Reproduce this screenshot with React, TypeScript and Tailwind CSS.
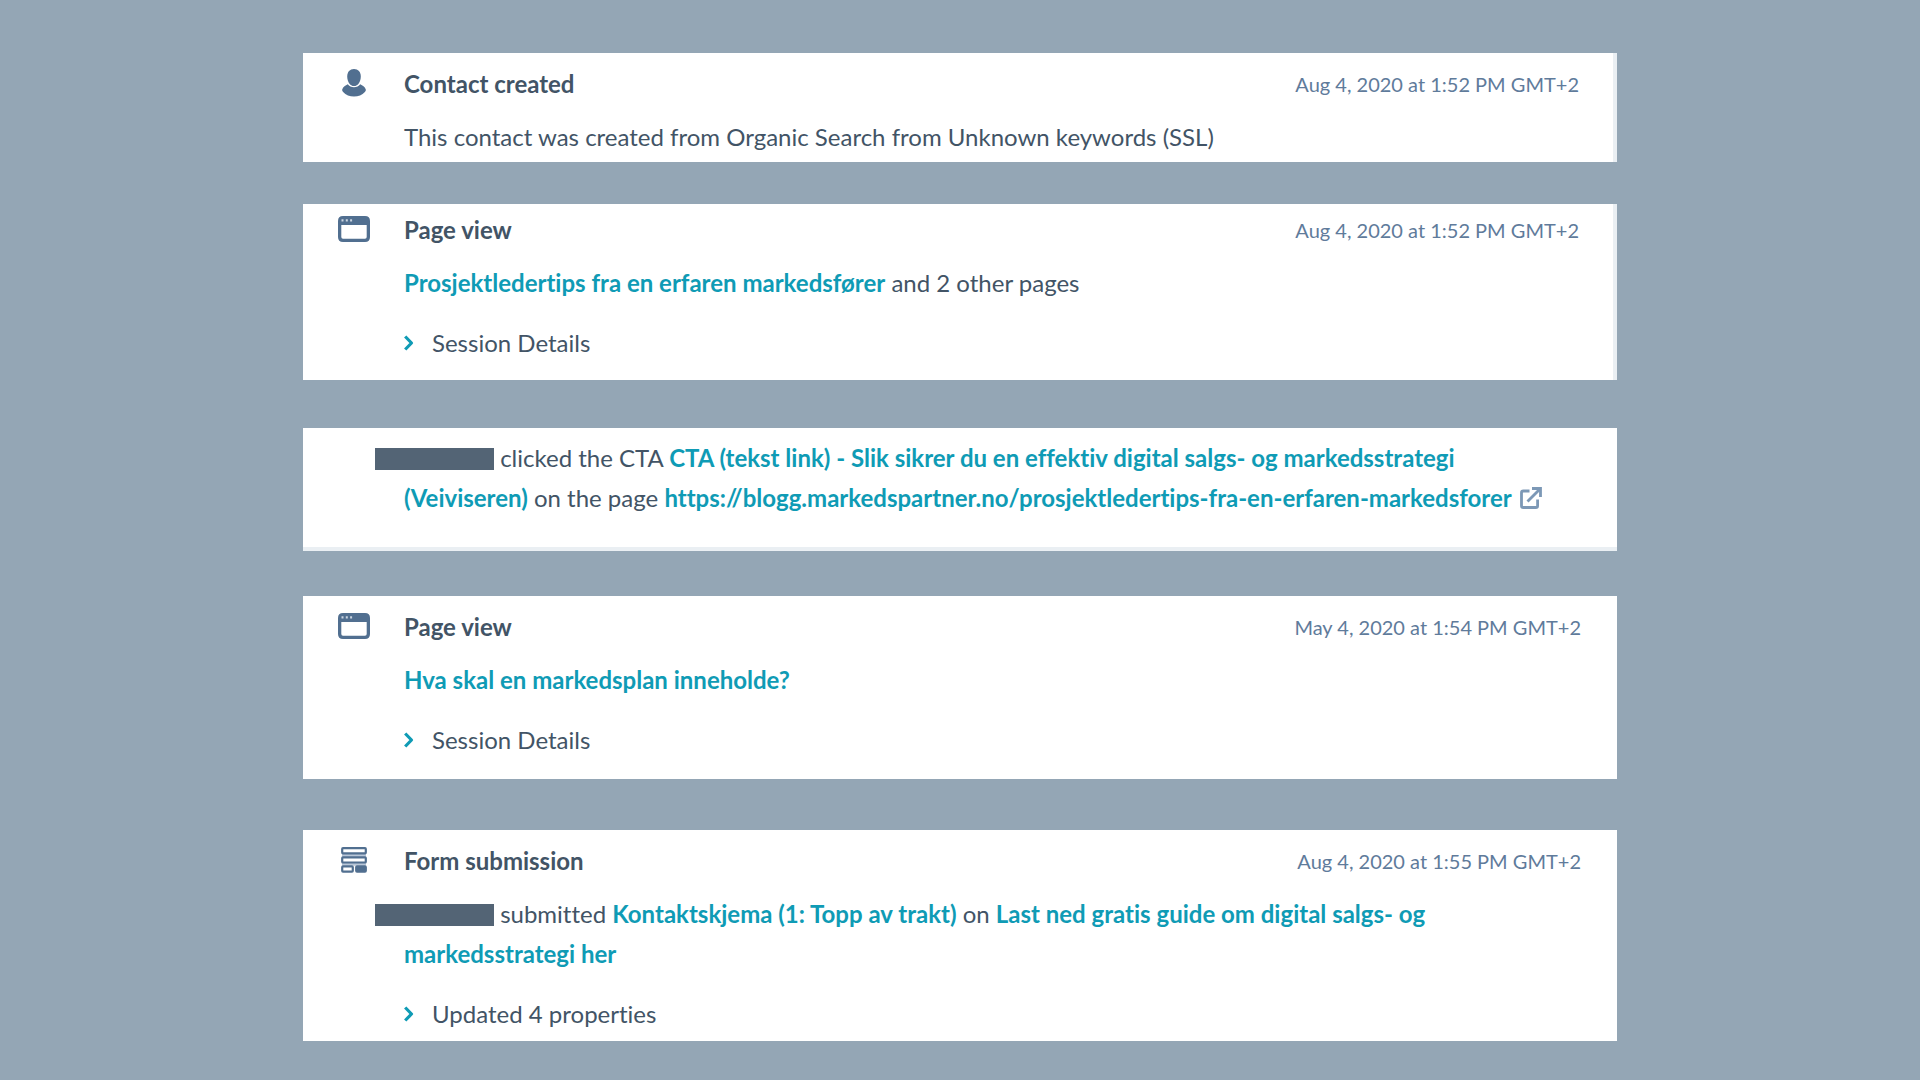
import React from 'react';

interface ActivityCardProps {
  icon?: React.ReactNode;
  title?: string;
  date?: string;
  details?: string;
  className: string;
  children: React.ReactNode;
}

const ContactIcon = () => (
  <svg className="w-6 h-7" viewBox="0 0 24 28" fill="currentColor">
    <path d="M12 0C7.900 0 5.200 3 5.200 7.400C5.200 12.400 8 17 12 17C16 17 18.800 12.400 18.800 7.400C18.800 3 16.100 0 12 0Z" />
    <path d="M5.800 15.200C3.400 16.300 1.200 17.700 0.300 20.200C-0.100 21.300 0.300 22.200 1.100 23C3.800 26.100 7.700 27.600 12 27.600C16.300 27.600 20.200 26.100 22.900 23C23.700 22.200 24.100 21.300 23.700 20.200C22.800 17.700 20.600 16.300 18.200 15.200C16.800 17.200 14.600 18.200 12 18.200C9.400 18.200 7.200 17.200 5.800 15.200Z" />
  </svg>
);

const WindowIcon = () => (
  <svg className="w-8 h-[26px]" viewBox="0 0 32 26">
    <path fill="currentColor" fillRule="evenodd" d="M5 0H27Q32 0 32 5V21Q32 26 27 26H5Q0 26 0 21V5Q0 0 5 0ZM3.300 9V21Q3.300 22.700 5 22.700H27Q28.700 22.700 28.700 21V9Z" />
    <path fill="#c9d4e0" d="M3.500 3.300h2v2.200h-2zM7.800 3.300h2v2.200h-2zM12.100 3.300h2v2.200h-2z" />
  </svg>
);

const FormIcon = () => (
  <svg className="w-[26px] h-[26px]" viewBox="0 0 26 26" fill="none" stroke="currentColor" strokeWidth="2.200">
    <path stroke="#b9c7d8" strokeWidth="3" d="M1 8.500h24M1 17.200h24" />
    <rect x="1.200" y="1.200" width="23.600" height="5.200" rx="0.800" fill="#fff" />
    <rect x="1.200" y="10.300" width="23.600" height="5.200" rx="0.800" fill="#fff" />
    <rect x="1.200" y="19.400" width="10.600" height="5.200" rx="0.800" fill="#fff" />
    <rect x="15.200" y="19.400" width="9.600" height="5.200" rx="0.800" fill="currentColor" />
  </svg>
);

const ExternalIcon = () => (
  <svg className="inline-block w-[22px] h-[22px] ml-2 align-[-2px] text-[#7c98b6]" viewBox="0 0 22 22" fill="none" stroke="currentColor" strokeWidth="2.800">
    <path d="M9.500 4H3.300Q1.500 4 1.500 5.800V18.700Q1.500 20.500 3.300 20.500H15.800Q17.600 20.500 17.600 18.700V12.500" />
    <path d="M7.500 14.500L19.500 2.500" />
    <path d="M12 1.500H20.500V10" />
  </svg>
);

const ChevronIcon = () => (
  <svg className="w-[10px] h-4" viewBox="0 0 10 16" fill="none" stroke="currentColor" strokeWidth="3.200">
    <path d="M1.200 1.500L7.500 8L1.200 14.500" strokeLinejoin="round" />
  </svg>
);

const Redacted = () => (
  <span className="inline-block w-[119px] h-[22px] -ml-[29px] align-[-3px] bg-[#536475]" />
);

const Link: React.FC<{ children: React.ReactNode }> = ({ children }) => (
  <a href="#" className="font-bold text-[#0f9bb5]">{children}</a>
);

const ActivityCard: React.FC<ActivityCardProps> = ({ icon, title, date, details, className, children }) => (
  <article className={`flex bg-white ${className}`}>
    <div className="flex h-[38px] w-[101px] shrink-0 items-center justify-center text-[#516f90]">{icon}</div>
    <div className="flex-1">
      {title && (
        <header className="mb-[13px] flex h-10 items-center justify-between">
          <h2 className="font-bold">{title}</h2>
          <time className="text-[20px] text-[#5f7b9b]">{date}</time>
        </header>
      )}
      <p>{children}</p>
      {details && (
        <button type="button" className="mt-5 flex items-center gap-[18px]">
          <span className="text-[#0f9bb5]"><ChevronIcon /></span>
          {details}
        </button>
      )}
    </div>
  </article>
);

const App: React.FC = () => {
  return (
    <main className="min-h-screen bg-[#94a6b5] pt-[53px] pb-[39px] font-['Lato','Liberation_Sans',sans-serif] text-[24px] leading-[40px] text-[#425466] [font-variant-ligatures:none]">
      <div className="mx-auto w-full max-w-[1314px]">
        <ActivityCard
          className="mb-[42px] border-r-4 border-[#eaeff3] pt-[11px] pr-[34px] pb-[5px]"
          icon={<ContactIcon />}
          title="Contact created"
          date="Aug 4, 2020 at 1:52 PM GMT+2"
        >
          This contact was created from Organic Search from Unknown keywords (SSL)
        </ActivityCard>

        <ActivityCard
          className="mb-12 border-r-4 border-[#eaeff3] pt-[6px] pr-[34px] pb-[17px]"
          icon={<WindowIcon />}
          title="Page view"
          date="Aug 4, 2020 at 1:52 PM GMT+2"
          details="Session Details"
        >
          <Link>Prosjektledertips fra en erfaren markedsfører</Link> and 2 other pages
        </ActivityCard>

        <ActivityCard className="mb-[45px] border-b-4 border-[#eaeff3] pt-[10px] pr-9 pb-[29px]">
          <Redacted /> clicked the CTA <Link>CTA (tekst link) - Slik sikrer du en effektiv digital salgs- og markedsstrategi (Veiviseren)</Link> on the page{' '}
          <Link>https://blogg.markedspartner.no/prosjektledertips-fra-en-erfaren-markedsforer<ExternalIcon /></Link>
        </ActivityCard>

        <ActivityCard
          className="mb-[51px] pt-[11px] pr-9 pb-[19px]"
          icon={<WindowIcon />}
          title="Page view"
          date="May 4, 2020 at 1:54 PM GMT+2"
          details="Session Details"
        >
          <Link>Hva skal en markedsplan inneholde?</Link>
        </ActivityCard>

        <ActivityCard
          className="pt-[11px] pr-9 pb-[7px]"
          icon={<FormIcon />}
          title="Form submission"
          date="Aug 4, 2020 at 1:55 PM GMT+2"
          details="Updated 4 properties"
        >
          <Redacted /> submitted <Link>Kontaktskjema (1: Topp av trakt)</Link> on <Link>Last ned gratis guide om digital salgs- og markedsstrategi her</Link>
        </ActivityCard>
      </div>
    </main>
  );
};

export default App;
